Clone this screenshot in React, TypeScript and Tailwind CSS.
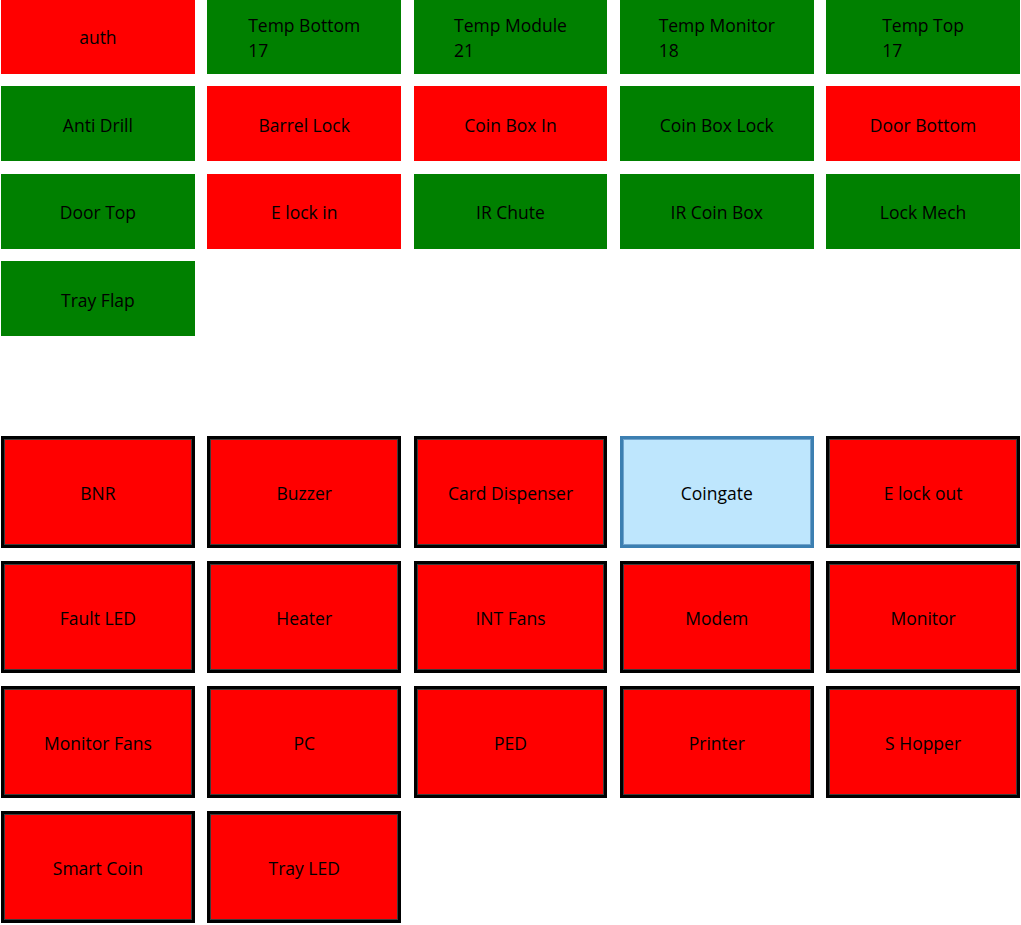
import React from "react";

type Tile = { label: string; value?: string; ok: boolean };

const top: Tile[] = [
  { label: "auth", ok: false },
  { label: "Temp Bottom", value: "17", ok: true },
  { label: "Temp Module", value: "21", ok: true },
  { label: "Temp Monitor", value: "18", ok: true },
  { label: "Temp Top", value: "17", ok: true },
  { label: "Anti Drill", ok: true },
  { label: "Barrel Lock", ok: false },
  { label: "Coin Box In", ok: false },
  { label: "Coin Box Lock", ok: true },
  { label: "Door Bottom", ok: false },
  { label: "Door Top", ok: true },
  { label: "E lock in", ok: false },
  { label: "IR Chute", ok: true },
  { label: "IR Coin Box", ok: true },
  { label: "Lock Mech", ok: true },
  { label: "Tray Flap", ok: true },
];

const bottom: string[] = [
  "BNR",
  "Buzzer",
  "Card Dispenser",
  "Coingate",
  "E lock out",
  "Fault LED",
  "Heater",
  "INT Fans",
  "Modem",
  "Monitor",
  "Monitor Fans",
  "PC",
  "PED",
  "Printer",
  "S Hopper",
  "Smart Coin",
  "Tray LED",
];

export default function App() {
  return (
    <div
      className="w-[1021px] h-[925px] overflow-hidden bg-white text-black text-[17.5px]"
      style={{ fontFamily: '"Open Sans", "Noto Sans", sans-serif' }}
    >
      <div className="grid grid-cols-[repeat(5,193.8px)] auto-rows-[75px] gap-x-[12.5px] gap-y-[12.5px] pl-[1px] mt-[-1.5px]">
        {top.map((t) => (
          <div
            key={t.label}
            className={`flex items-center justify-center pt-[3px] ${t.ok ? "bg-[#008000]" : "bg-[#ff0000]"}`}
          >
            {t.value ? (
              <div className="text-left leading-[25px]">
                <div>{t.label}</div>
                <div>{t.value}</div>
              </div>
            ) : (
              <span>{t.label}</span>
            )}
          </div>
        ))}
      </div>
      <div className="grid grid-cols-[repeat(5,193.8px)] auto-rows-[112px] gap-x-[12.5px] gap-y-[13px] pl-[1px] mt-[100px]">
        {bottom.map((b) =>
          b === "Coingate" ? (
            <div
              key={b}
              className="flex items-center justify-center pt-[2px] bg-[#bee6fd] border-[3px] border-[#3c7fb1] shadow-[inset_0_0_0_1px_#6fa3cc]"
            >
              {b}
            </div>
          ) : (
            <div
              key={b}
              className="flex items-center justify-center pt-[2px] bg-[#ff0000] border-[3px] border-black shadow-[inset_0_0_0_1px_#3c3c3c]"
            >
              {b}
            </div>
          )
        )}
      </div>
    </div>
  );
}
